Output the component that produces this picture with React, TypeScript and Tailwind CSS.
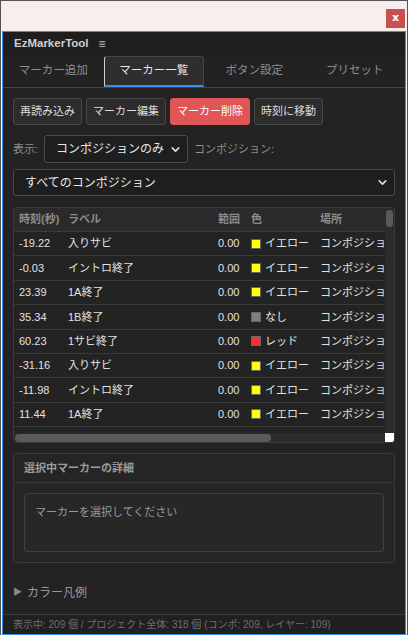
import { ChevronDown } from 'lucide-react';

interface MarkerRow {
    time: string;
    label: string;
    range: string;
    color: string;
    swatch: string;
    place: string;
}

const MARKERS: MarkerRow[] = [
    { time: '-19.22', label: '入りサビ', range: '0.00', color: 'イエロー', swatch: 'bg-[#ffff00]', place: 'コンポジション' },
    { time: '-0.03', label: 'イントロ終了', range: '0.00', color: 'イエロー', swatch: 'bg-[#ffff00]', place: 'コンポジション' },
    { time: '23.39', label: '1A終了', range: '0.00', color: 'イエロー', swatch: 'bg-[#ffff00]', place: 'コンポジション' },
    { time: '35.34', label: '1B終了', range: '0.00', color: 'なし', swatch: 'bg-[#808080]', place: 'コンポジション' },
    { time: '60.23', label: '1サビ終了', range: '0.00', color: 'レッド', swatch: 'bg-[#ff3030]', place: 'コンポジション' },
    { time: '-31.16', label: '入りサビ', range: '0.00', color: 'イエロー', swatch: 'bg-[#ffff00]', place: 'コンポジション' },
    { time: '-11.98', label: 'イントロ終了', range: '0.00', color: 'イエロー', swatch: 'bg-[#ffff00]', place: 'コンポジション' },
    { time: '11.44', label: '1A終了', range: '0.00', color: 'イエロー', swatch: 'bg-[#ffff00]', place: 'コンポジション' },
    { time: '34.02', label: '1B終了', range: '0.00', color: 'なし', swatch: 'bg-[#808080]', place: 'コンポジション' },
];

const TABS = ['マーカー追加', 'マーカー一覧', 'ボタン設定', 'プリセット'];

const FONT = "font-['Liberation_Sans','Noto_Sans_CJK_JP',sans-serif]";

const ToolButton = ({ label, danger }: { label: string; danger?: boolean }) => (
    <button
        className={
            danger
                ? 'h-[27px] px-[6px] rounded-[3px] bg-[#e05555] border border-[#e05555] text-white text-[11px]'
                : 'h-[27px] px-[6px] rounded-[3px] bg-[#2c2c2c] border border-[#474747] text-[#dcdcdc] text-[11px]'
        }
    >
        {label}
    </button>
);

const TableHeader = () => (
    <div className="flex h-[24px] shrink-0 items-center bg-[#2a2a2a] border-b border-[#3a3a3a] text-[11px] font-bold text-[#8c8c8c] whitespace-nowrap">
        <div className="w-[49px] pl-[5px] shrink-0">時刻(秒)</div>
        <div className="w-[150px] pl-[5px] shrink-0">ラベル</div>
        <div className="w-[33px] pl-[5px] shrink-0">範囲</div>
        <div className="w-[69px] pl-[5px] shrink-0">色</div>
        <div className="w-[90px] pl-[5px] shrink-0">場所</div>
    </div>
);

const TableRow = ({ row }: { row: MarkerRow }) => (
    <div className="flex h-[24.4px] shrink-0 items-center border-b border-[#3a3a3a] text-[11px] text-[#e2e2e2] whitespace-nowrap">
        <div className="w-[49px] pl-[5px] shrink-0">{row.time}</div>
        <div className="w-[150px] pl-[5px] shrink-0">{row.label}</div>
        <div className="w-[33px] pl-[5px] shrink-0">{row.range}</div>
        <div className="w-[69px] pl-[5px] shrink-0 flex items-center">
            <span className={`w-[10px] h-[10px] border border-[#666] mr-[4px] ${row.swatch}`} />
            {row.color}
        </div>
        <div className="w-[90px] pl-[5px] shrink-0">{row.place}</div>
    </div>
);

const MarkerTable = () => (
    <div className="mt-[11px] h-[236px] shrink-0 border border-[#3a3a3a] rounded-[3px] bg-[#232323] flex flex-col overflow-hidden">
        <div className="flex-1 flex min-h-0">
            <div className="flex-1 overflow-hidden flex flex-col">
                <TableHeader />
                {MARKERS.map((row, index) => (
                    <TableRow key={index} row={row} />
                ))}
            </div>
            <div className="w-[9px] bg-[#2b2b2b] pt-[2px] flex justify-center">
                <div className="w-[7px] h-[17px] rounded-full bg-[#5a5a5a]" />
            </div>
        </div>
        <div className="h-[9px] flex shrink-0">
            <div className="flex-1 bg-[#2b2b2b] pl-[1px] flex items-center">
                <div className="w-[256px] h-[8px] rounded-full bg-[#5a5a5a]" />
            </div>
            <div className="w-[9px] bg-white" />
        </div>
    </div>
);

const DetailsPanel = () => (
    <div className="mt-[10px] h-[110px] shrink-0 border border-[#3a3a3a] rounded-[4px] bg-[#252525] flex flex-col">
        <div className="h-[29px] border-b border-[#3a3a3a] px-[10px] flex items-center text-[11px] font-bold text-[#9a9a9a]">
            選択中マーカーの詳細
        </div>
        <div className="p-[10px] flex-1 flex">
            <div className="flex-1 border border-[#3f3f3f] rounded-[3px] bg-[#272727] px-[10px] pt-[10px] text-[11px] text-[#9a9a9a]">
                マーカーを選択してください
            </div>
        </div>
    </div>
);

export default function App() {
    return (
        <div className={`w-[408px] h-[635px] bg-[#f9eeee] border-t border-l border-r border-[#555] flex flex-col overflow-hidden ${FONT}`}>
            <div className="h-[30px] shrink-0 flex justify-end items-start pt-[8px] pr-[2px]">
                <div className="w-[19px] h-[19px] bg-[#c9504f] text-white text-[11px] font-bold flex items-center justify-center font-['DejaVu_Sans',sans-serif]">
                    x
                </div>
            </div>

            <div className="ml-[1px] mr-px h-[604px] border border-[#3b8ee8] bg-[#232323] flex flex-col">
                <div className="h-[23px] shrink-0 bg-[#1e1e1e] px-[11px] flex items-center gap-[10px]">
                    <span className="text-[11.5px] font-bold text-[#d0d0d0]">EzMarkerTool</span>
                    <span className="text-[12px] text-[#bdbdbd] leading-none">≡</span>
                </div>

                <div className="h-[33px] shrink-0 grid grid-cols-4 border-b border-[#444] bg-[#222]">
                    {TABS.map((tab, index) =>
                        index === 1 ? (
                            <div
                                key={tab}
                                className="mt-[1px] h-[31px] bg-[#2e2e2e] border-l border-l-[#cfcfcf] border-r border-r-[#444] border-t border-t-[#444] border-b-2 border-b-[#3b8ee8] rounded-t-[3px] flex items-center justify-center text-[11.5px] text-[#e6e6e6]"
                            >
                                {tab}
                            </div>
                        ) : (
                            <div key={tab} className="flex items-center justify-center text-[11.5px] text-[#8e8e8e]">
                                {tab}
                            </div>
                        )
                    )}
                </div>

                <div className="px-[10px] flex flex-col flex-1 min-h-0">
                    <div className="mt-[10px] flex gap-[4px]">
                        <ToolButton label="再読み込み" />
                        <ToolButton label="マーカー編集" />
                        <ToolButton label="マーカー削除" danger />
                        <ToolButton label="時刻に移動" />
                    </div>

                    <div className="mt-[10px] h-[28px] flex items-center">
                        <span className="text-[11px] text-[#8e8e8e] mr-[6px]">表示:</span>
                        <div className="w-[144px] h-[28px] border border-[#4a4a4a] rounded-[3px] bg-[#1e1e1e] pl-[11px] pr-[5px] flex items-center justify-between text-[12px] text-[#e6e6e6] whitespace-nowrap">
                            コンポジションのみ
                            <ChevronDown className="w-[13px] h-[13px] text-[#dcdcdc]" strokeWidth={3} />
                        </div>
                        <span className="ml-[6px] text-[11px] text-[#8e8e8e]">コンポジション:</span>
                    </div>

                    <div className="mt-[6px] h-[27px] border border-[#4a4a4a] rounded-[3px] bg-[#1e1e1e] pl-[11px] pr-[5px] flex items-center justify-between text-[12px] text-[#e6e6e6]">
                        すべてのコンポジション
                        <ChevronDown className="w-[13px] h-[13px] text-[#dcdcdc]" strokeWidth={3} />
                    </div>

                    <MarkerTable />
                    <DetailsPanel />

                    <div className="mt-[21px] flex items-center gap-[5px] text-[12px] text-[#9a9a9a]">
                        <span className="text-[9px] text-[#8a8a8a]">▶</span>
                        カラー凡例
                    </div>
                </div>

                <div className="h-[20px] shrink-0 border-t border-[#3a3a3a] bg-[#202020] px-[10px] flex items-center text-[10px] text-[#6e6e6e] whitespace-nowrap">
                    表示中: 209 個 / プロジェクト全体: 318 個 (コンポ: 209, レイヤー: 109)
                </div>
            </div>
        </div>
    );
}
